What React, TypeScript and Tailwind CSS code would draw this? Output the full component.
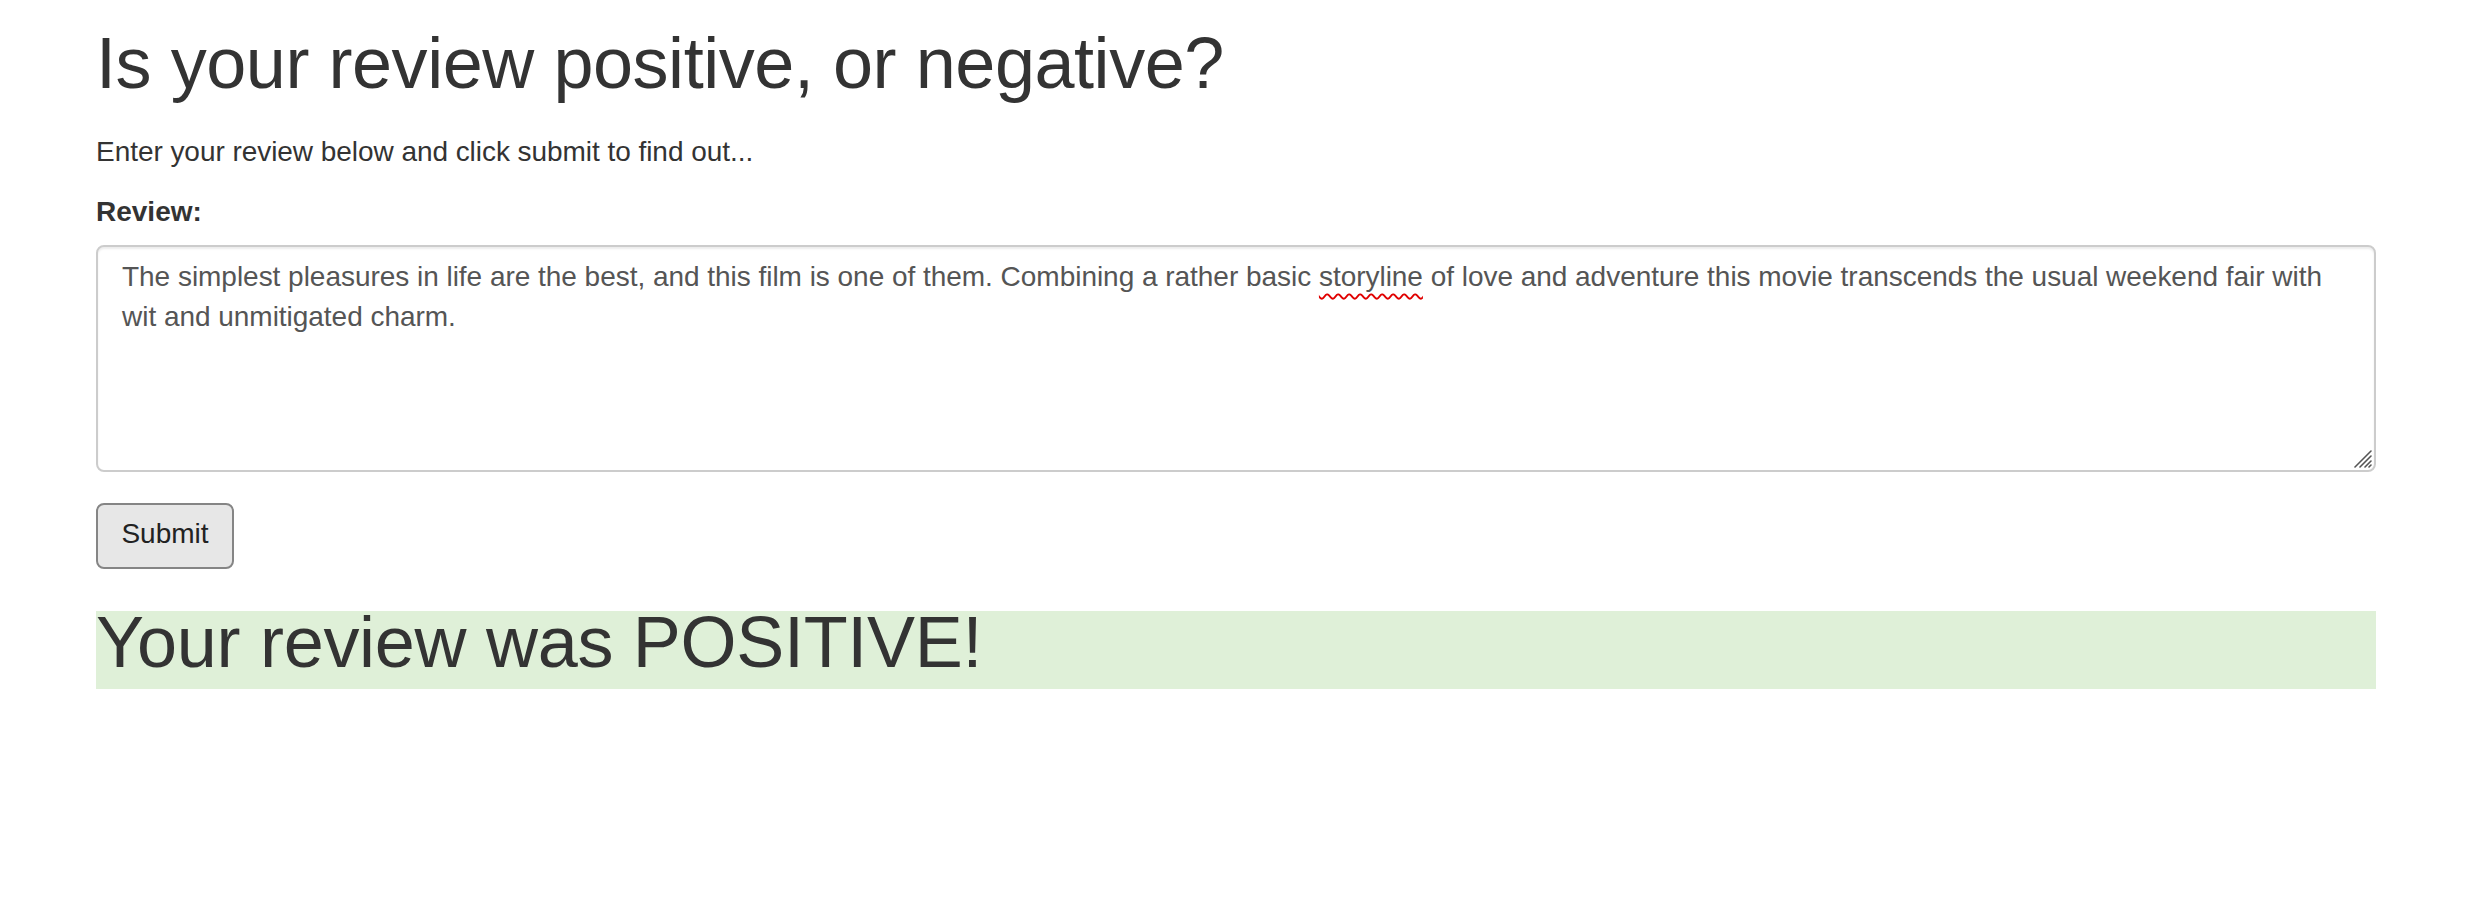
import React from "react";

export default function App() {
  return (
    <div className="min-h-[920px] bg-white">
      <div className="ml-[96px] w-[2280px] font-['Liberation_Sans',Arial,Helvetica,sans-serif] text-[#333]">
        <h1 className="pt-[24px] text-[72px] font-normal leading-[79.2px] tracking-[-0.45px] mb-[29px]">
          Is your review positive, or negative?
        </h1>
        <p className="text-[28px] leading-[40px] tracking-[-0.05px] mb-[20px]">
          Enter your review below and click submit to find out...
        </p>
        <label className="block text-[28px] font-bold leading-[40px] mb-[13px]">Review:</label>
        <div className="relative h-[227px] w-full rounded-[8px] border-2 border-[#ccc] bg-white px-[24px] pt-[10px] text-[28px] leading-[40px] tracking-[-0.03px] text-[#555] shadow-[inset_0_2px_2px_rgba(0,0,0,0.075)]">
          <div className="whitespace-nowrap">
            <span>The simplest pleasures in life are the best, and this film is one of them. Combining a rather basic </span>
            <span className="underline decoration-wavy decoration-[#e00000] decoration-[1.5px] underline-offset-[7px]">storyline</span>
            <span> of love and adventure this movie transcends the usual weekend fair with</span>
          </div>
          <div>wit and unmitigated charm.</div>
          <svg className="absolute right-[2px] bottom-[2px]" width="20" height="20" viewBox="0 0 20 20">
            <g stroke="#555" strokeWidth="1.6" strokeLinecap="round">
              <line x1="19" y1="3" x2="3" y2="19" />
              <line x1="19" y1="8" x2="8" y2="19" />
              <line x1="19" y1="13" x2="13" y2="19" />
              <line x1="19" y1="17" x2="17" y2="19" />
            </g>
          </svg>
        </div>
        <button className="mt-[31px] flex h-[66px] w-[138px] items-center justify-center rounded-[8px] border-2 border-[#858585] bg-[#e7e7e7] pb-[4px] text-[28px] leading-[32px] text-[#222]">
          Submit
        </button>
        <div className="mt-[42px] w-full bg-[#dff0d8] pb-[16px] text-[72px] leading-[62px] tracking-[-0.3px] text-[#333]">
          Your review was POSITIVE!
        </div>
      </div>
    </div>
  );
}
